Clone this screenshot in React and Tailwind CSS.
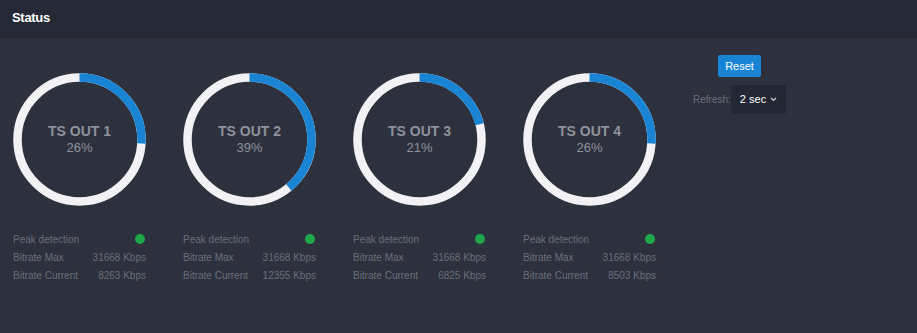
import React from 'react';

const outputs = [
    { name: 'TS OUT 1', pct: 26, max: '31668 Kbps', cur: '8263 Kbps' },
    { name: 'TS OUT 2', pct: 39, max: '31668 Kbps', cur: '12355 Kbps' },
    { name: 'TS OUT 3', pct: 21, max: '31668 Kbps', cur: '6825 Kbps' },
    { name: 'TS OUT 4', pct: 26, max: '31668 Kbps', cur: '8503 Kbps' },
];

const Ring = ({ pct }) => {
    const r = 62;
    const c = 2 * Math.PI * r;
    return (
        <svg width="133" height="133" viewBox="0 0 133 133" className="absolute inset-0">
            <circle cx="66.5" cy="66.5" r={r} fill="none" stroke="#f2f2f5" strokeWidth="8.5" />
            <circle
                cx="66.5"
                cy="66.5"
                r={r}
                fill="none"
                stroke="#1a84d4"
                strokeWidth="8.5"
                strokeDasharray={`${(c * pct) / 100} ${c}`}
                transform="rotate(-90 66.5 66.5)"
            />
        </svg>
    );
};

const OutputCard = ({ out }) => (
    <div className="w-[170px] shrink-0">
        <div className="relative w-[133px] h-[133px] flex flex-col items-center justify-center">
            <Ring pct={out.pct} />
            <span className="relative text-[14px] font-bold text-[#8d929c] leading-[18px] mt-[-2px]">{out.name}</span>
            <span className="relative text-[13px] text-[#8d929c] leading-[16px]">{out.pct}%</span>
        </div>
        <div className="w-[133px] mt-[24px] text-[10px] text-[#6a6f7a]">
            <div className="flex items-center justify-between h-[18px]">
                <span>Peak detection</span>
                <span className="w-[10px] h-[10px] rounded-full bg-[#1fa84a] mr-[1px]"></span>
            </div>
            <div className="flex items-center justify-between h-[18px]">
                <span>Bitrate Max</span>
                <span>{out.max}</span>
            </div>
            <div className="flex items-center justify-between h-[18px]">
                <span>Bitrate Current</span>
                <span>{out.cur}</span>
            </div>
        </div>
    </div>
);

export default function App() {
    return (
        <div className="w-[917px] h-[333px] bg-[#2c313d] font-['Liberation_Sans',Arial,sans-serif] overflow-hidden">
            <header className="h-[38px] bg-[#252935] border-b border-[#22252f] flex items-center px-[12px]">
                <h1 className="text-white text-[13px] font-bold tracking-[-0.3px] mt-[-2px]">Status</h1>
            </header>
            <main className="flex pl-[13px] pt-[35px]">
                {outputs.map((o) => (
                    <OutputCard key={o.name} out={o} />
                ))}
                <div className="flex flex-col items-center mt-[-18px] w-[93px]">
                    <button className="w-[43px] h-[22px] bg-[#1a84d4] text-white text-[11px] rounded-[2px]">Reset</button>
                    <div className="flex items-center mt-[8px] self-start">
                        <span className="text-[10px] text-[#6a6f7a] w-[38px]">Refresh:</span>
                        <div className="w-[55px] h-[29px] bg-[#232733] rounded-[2px] flex items-center justify-center gap-[4px] text-white text-[11px]">
                            <span>2 sec</span>
                            <svg width="7" height="5" viewBox="0 0 7 5">
                                <path d="M1 1l2.5 2.5L6 1" fill="none" stroke="#cfd2d8" strokeWidth="1.2" />
                            </svg>
                        </div>
                    </div>
                </div>
            </main>
        </div>
    );
}
